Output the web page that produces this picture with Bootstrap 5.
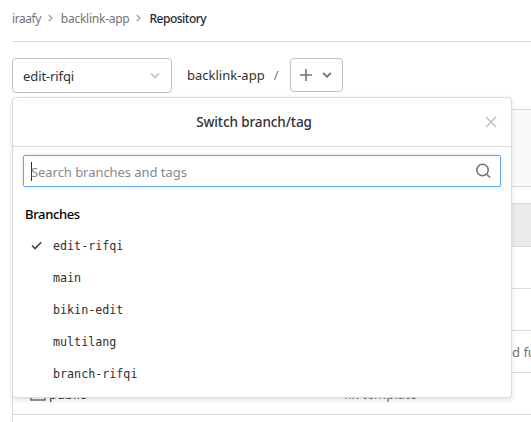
<!DOCTYPE html>
<html lang="en">
<head>
<meta charset="utf-8">
<meta name="viewport" content="width=device-width, initial-scale=1">
<title>Repository</title>
<link href="https://cdn.jsdelivr.net/npm/bootstrap@5.3.0/dist/css/bootstrap.min.css" rel="stylesheet">
<style>
body{font-family:"Noto Sans","Open Sans",sans-serif;font-size:13px;line-height:20px;color:#303030;background:#fff;height:422px;overflow:hidden}
.page{padding-left:12px;height:422px;overflow:hidden}
.crumbs{height:42px;padding-bottom:4px;border-bottom:1px solid #dbdbdb;font-size:12px;letter-spacing:-.25px;color:#737278}
.c1{letter-spacing:-.45px}
.crumbs svg{margin:-1px 8px 0 7px}
.crumbs .current{color:#28272d;font-weight:500;letter-spacing:-.5px}
.tree-bar{padding-top:16px;height:67px}
.ref-btn,.add-btn{height:35px;border:1px solid #bfbfc3;border-radius:4px;background:#fff;color:#303030}
.ref-btn{width:160px;padding:0 10px}
.ref-btn span{letter-spacing:-.1px}
.add-btn{width:53px;height:34px;padding:0 9px}
.project{margin:0 9px 0 15px;letter-spacing:0}
.slash{margin-right:12px;color:#737278}
.commit-box{height:78px;border:1px solid #dbdbdb;background:#fafafd}
.files{height:240px;margin-top:16px;border-left:1px solid #dbdbdb;border-top:1px solid #dbdbdb}
.file-row{height:42px;border-bottom:1px solid #dbdbdb;padding-left:17px}
.file-head{height:43px;background:#ebebed}
.file-name{width:298px;padding-left:3px}
.message{color:#737278;white-space:nowrap}
.message.long{padding-left:184px}
.ref-menu{left:12px;top:97px;width:500px;height:301px;background:#fff;border:1px solid #dbdbdb;border-radius:4px;box-shadow:0 2px 5px rgba(0,0,0,.12)}
.menu-head{height:49px;padding-right:16px;border-bottom:1px solid #dbdbdb;font-size:13.5px;font-weight:500;color:#303038;letter-spacing:-.1px}
.close-btn{right:14px;top:18px;line-height:0}
.search{margin:8px 10px 0;height:32px;border:1px solid #63a6e9;border-radius:2px;box-shadow:0 0 4px rgba(99,166,233,.35);padding:0 9px 0 7px}
.caret{width:1px;height:19px;background:#303030}
.hint{color:#89888d;letter-spacing:-.05px;margin-left:-1px;padding-top:2px}
.group-title{margin:17px 0 0 12px;height:20px;font-weight:500;color:#000;font-size:13px;letter-spacing:-.35px}
.branches{margin-top:6px}
.branch{height:32px;padding-left:17px;font:11.7px/20px "DejaVu Sans Mono",monospace;color:#303030}
.tick{width:23px;line-height:0}
</style>
<script src="https://cdn.jsdelivr.net/npm/bootstrap@5.3.0/dist/js/bootstrap.bundle.min.js"></script>
</head>
<body>
<main class="page position-relative">
  <nav class="crumbs d-flex align-items-center" aria-label="Breadcrumb">
    <span class="c1">iraafy</span>
    <svg width="5" height="8" fill="none" stroke="#a4a3a8" stroke-width="1.3"><path d="M.8 1 4 4 .8 7"/></svg>
    <span class="c2">backlink-app</span>
    <svg width="5" height="8" fill="none" stroke="#a4a3a8" stroke-width="1.3"><path d="M.8 1 4 4 .8 7"/></svg>
    <span class="current">Repository</span>
  </nav>
  <div class="tree-bar d-flex align-items-start">
    <button class="ref-btn d-flex align-items-center justify-content-between"><span>edit-rifqi</span>
      <svg width="12" height="8" fill="none" stroke="#bfbfc3" stroke-width="1.6"><path d="m2 1.500 4 4 4-4"/></svg>
    </button>
    <div class="d-flex align-items-center">
      <span class="project">backlink-app</span><span class="slash">/</span>
      <button class="add-btn d-flex align-items-center justify-content-between">
        <svg width="12" height="12" fill="none" stroke="#737278" stroke-width="1.6"><path d="M6 0v12M0 6h12"/></svg>
        <svg width="12" height="8" fill="none" stroke="#737278" stroke-width="1.8"><path d="m2.200 2 3.800 3.700L9.800 2"/></svg>
      </button>
    </div>
  </div>
  <div class="commit-box border-end-0"></div>
  <div class="files">
    <div class="file-row file-head"></div>
    <div class="file-row"></div>
    <div class="file-row"></div>
    <div class="file-row d-flex align-items-center"><span class="file-name flex-shrink-0"></span><span class="message long">d func</span></div>
    <div class="file-row d-flex align-items-center">
      <svg width="16" height="14" fill="none" stroke="#737278" stroke-width="1.6"><path d="M1 2.500V13h14V3.500H8L6.500 1H1z"/></svg>
      <span class="file-name flex-shrink-0">public</span><span class="message">fix template</span>
    </div>
  </div>
  <section class="ref-menu position-absolute">
    <div class="menu-head position-relative d-flex align-items-center justify-content-center">
      <span class="menu-title">Switch branch/tag</span>
      <span class="close-btn position-absolute"><svg width="12" height="12" fill="none" stroke="#bfbfc3" stroke-width="1.6"><path d="m1 1 10 10M11 1 1 11"/></svg></span>
    </div>
    <div class="search d-flex align-items-center">
      <span class="caret"></span><span class="hint">Search branches and tags</span>
      <svg class="ms-auto" width="16" height="16" fill="none" stroke="#737278" stroke-width="1.6"><circle cx="7.500" cy="7" r="5.700"/><path d="m11.500 11 3.500 3.500"/></svg>
    </div>
    <div class="group-title">Branches</div>
    <div class="branches">
      <div class="branch d-flex align-items-center"><span class="tick"><svg width="13" height="10" fill="none" stroke="#404040" stroke-width="1.6"><path d="m2 4.500 3 3 6.200-6.200"/></svg></span><span>edit-rifqi</span></div>
      <div class="branch d-flex align-items-center"><span class="tick"></span><span>main</span></div>
      <div class="branch d-flex align-items-center"><span class="tick"></span><span>bikin-edit</span></div>
      <div class="branch d-flex align-items-center"><span class="tick"></span><span>multilang</span></div>
      <div class="branch d-flex align-items-center"><span class="tick"></span><span>branch-rifqi</span></div>
    </div>
  </section>
</main>
</body>
</html>
